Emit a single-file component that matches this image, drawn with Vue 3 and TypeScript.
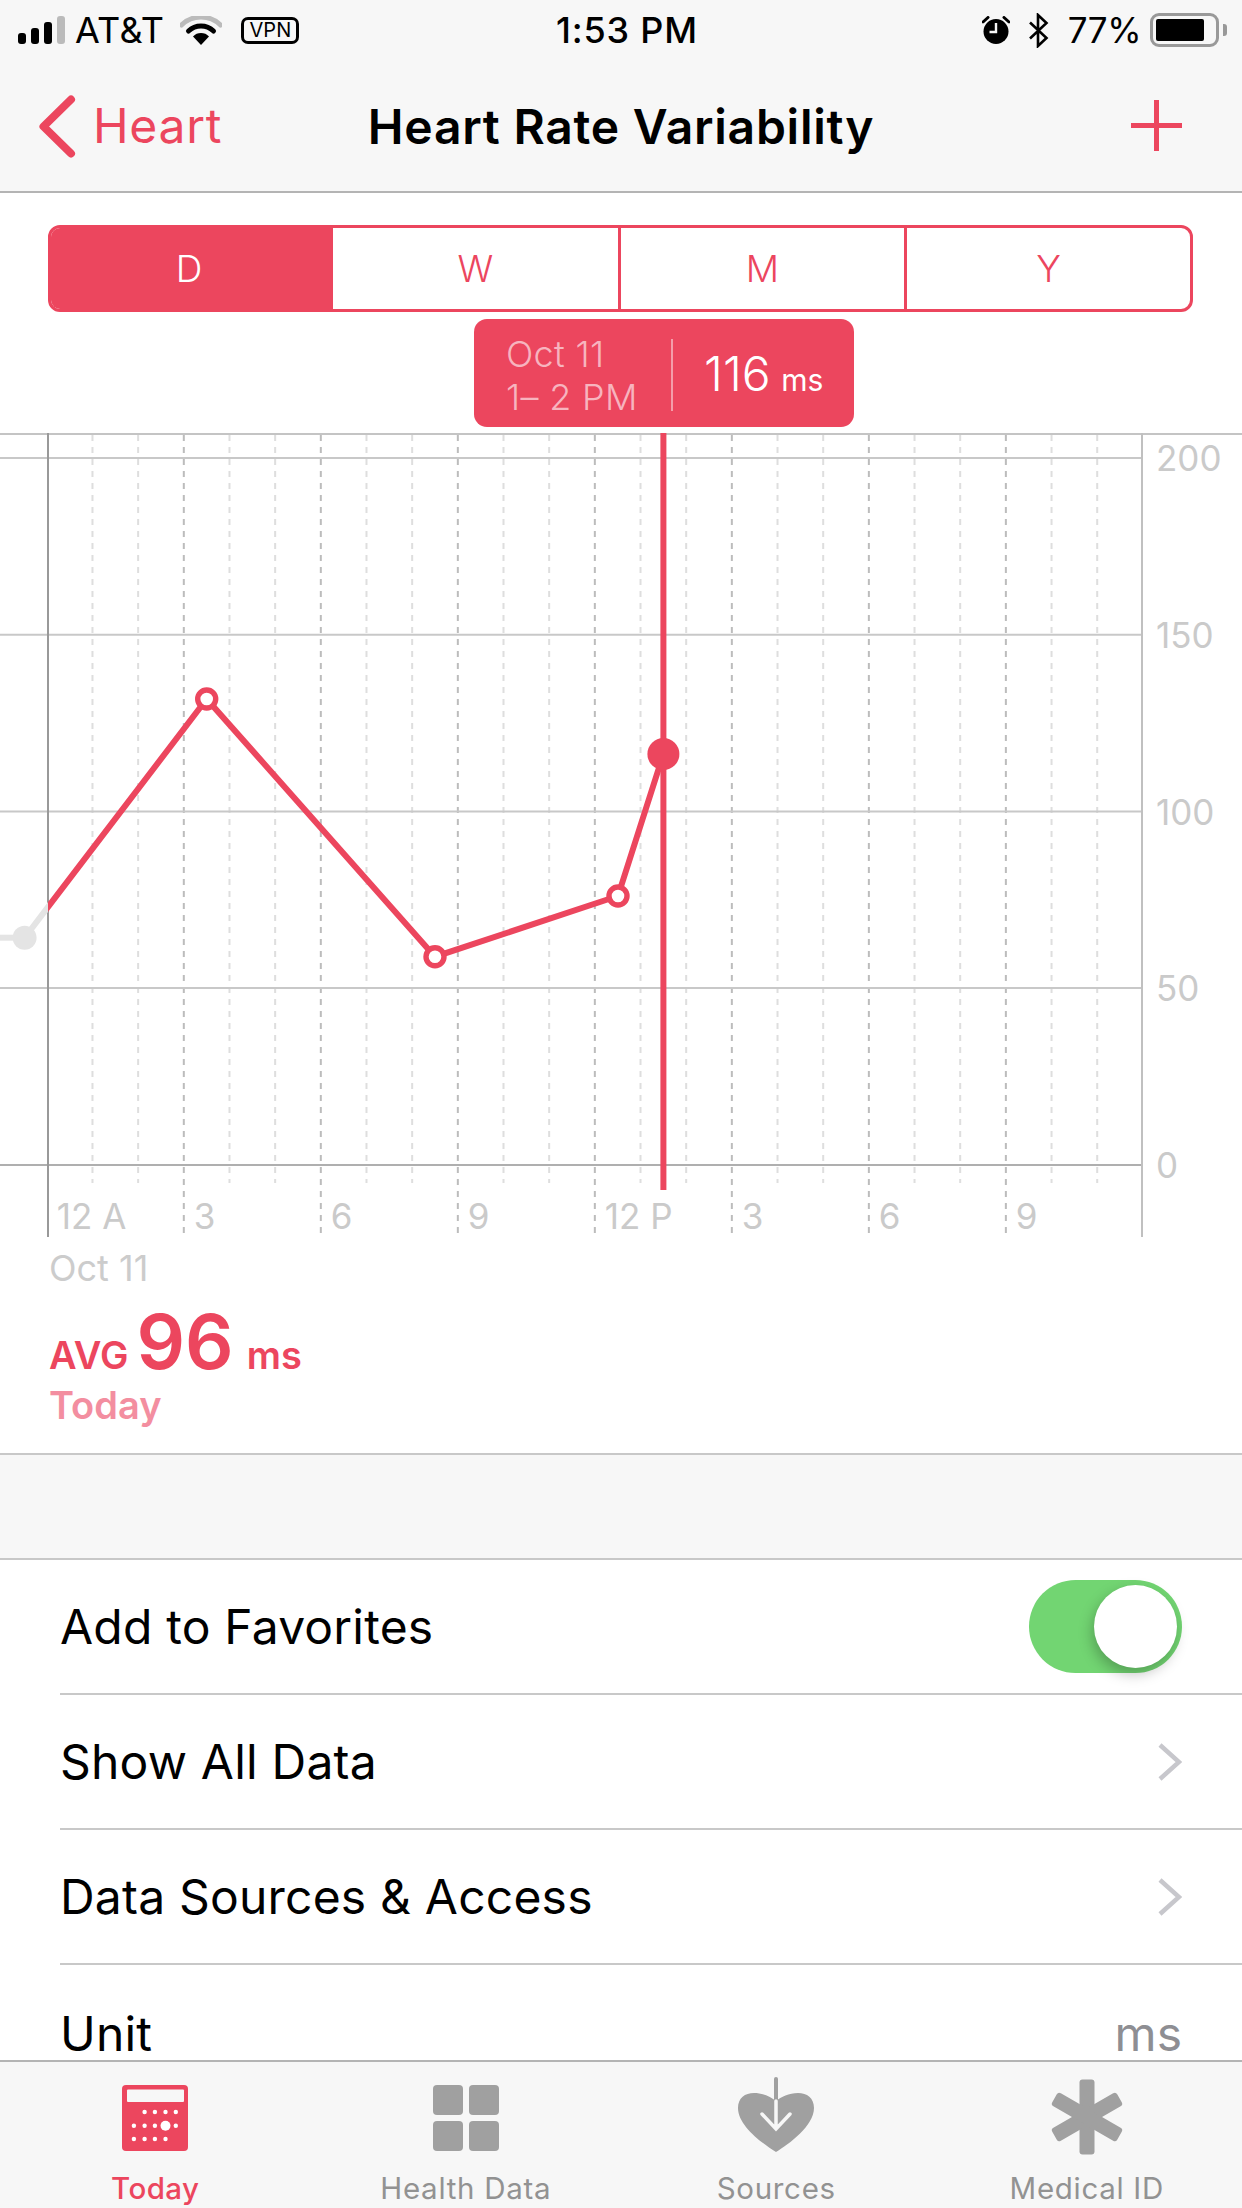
<script setup lang="ts">
const ACCENT = '#ec465e'

const segments = ['D', 'W', 'M', 'Y']

// chart geometry, in page pixels
const chartTop = 433
const hourWidth = 45.67
const gridLeft = 46.8
const plotLeft = 48
const plotRight = 1142
const chartHeight = 806

function y(v: number) {
  return v - chartTop
}

const hLines = [458, 634.7, 811.5, 988, 1165].map(y)
const yLabels = ['200', '150', '100', '50', '0']

const hours = Array.from({ length: 23 }, (_, i) => i + 1).map((i) => ({
  x: gridLeft + hourWidth * i,
  major: i % 3 === 0,
}))

const xLabels = ['12 A', '3', '6', '9', '12 P', '3', '6', '9'].map((text, i) => ({
  text,
  x: gridLeft + 10 + hourWidth * 3 * i,
}))

const pastPoint = { x: 24.6, y: y(937.7) }
const openPoints = [
  { x: 206.7, y: y(699) },
  { x: 435, y: y(956.7) },
  { x: 618, y: y(896) },
]
const selected = { x: 663.4, y: y(754) }

// the line is one shape: grey left of the axis, red right of it
const linePoints = [pastPoint, ...openPoints, selected].map((p) => `${p.x},${p.y}`).join(' ')

const rows = [
  { label: 'Add to Favorites', kind: 'toggle' },
  { label: 'Show All Data', kind: 'link' },
  { label: 'Data Sources & Access', kind: 'link' },
  { label: 'Unit', kind: 'value', value: 'ms' },
]

const dotRows = [
  { cy: 27, xs: [22.6, 32.9, 43.5, 53.8] },
  { cy: 40.7, xs: [11.9, 22.6, 32.9, 53.8] },
  { cy: 54, xs: [11.9, 22.6, 32.9, 43.5] },
]
</script>

<template>
  <div class="screen">
    <header class="top-bars">
      <div class="status-bar">
        <div class="status-side">
          <svg class="signal" width="47" height="28" viewBox="0 0 47 28">
            <rect x="0" y="17" width="8" height="11" rx="3" fill="#000" />
            <rect x="13" y="12" width="8" height="16" rx="3" fill="#000" />
            <rect x="26" y="6" width="8" height="22" rx="3" fill="#000" />
            <rect x="39" y="0" width="8" height="28" rx="3" fill="#bbb" />
          </svg>
          <span class="carrier">AT&amp;T</span>
          <svg class="wifi" width="42" height="29" viewBox="0 0 42 29">
            <path d="M1.5 9 A 28 28 0 0 1 40.5 9" fill="none" stroke="#bbb" stroke-width="5" stroke-linecap="round" />
            <path d="M8.5 15 A 18 18 0 0 1 33.5 15" fill="none" stroke="#000" stroke-width="5" stroke-linecap="round" />
            <path d="M21 29 L13 20.5 A 11 11 0 0 1 29 20.5 Z" fill="#000" />
          </svg>
          <span class="vpn">VPN</span>
        </div>
        <span class="clock">1:53 PM</span>
        <div class="status-side status-right">
          <svg class="alarm" width="28" height="28" viewBox="0 0 28 28">
            <circle cx="14" cy="15.5" r="12.5" fill="#000" />
            <path d="M14 7 V16 H7.5" fill="none" stroke="#f7f7f7" stroke-width="2.4" />
            <path d="M1 6 L6 1.5 M27 6 L22 1.5" stroke="#000" stroke-width="3" stroke-linecap="round" />
          </svg>
          <svg class="bluetooth" width="21" height="35" viewBox="0 0 21 35">
            <path d="M2 9.5 L18.5 25 L10 33 V2 L18.5 10 L2 25.5" fill="none" stroke="#000" stroke-width="2.6" />
          </svg>
          <span class="battery-text">77%</span>
          <div class="battery">
            <div class="battery-level"></div>
          </div>
          <div class="battery-nub"></div>
        </div>
      </div>
      <nav class="nav-bar">
        <div class="nav-back">
          <svg width="40" height="66" viewBox="0 0 40 66">
            <path d="M34 6.500 L6.500 33.500 L34 60.500" fill="none" :stroke="ACCENT" stroke-width="8" stroke-linecap="round" stroke-linejoin="round" />
          </svg>
          <span>Heart</span>
        </div>
        <h1 class="nav-title">Heart Rate Variability</h1>
        <svg class="nav-plus" width="51" height="51" viewBox="0 0 51 51">
          <path d="M0 25.5 H51 M25.5 0 V51" :stroke="ACCENT" stroke-width="5" />
        </svg>
      </nav>
    </header>

    <div class="segments">
      <div v-for="(seg, i) in segments" :key="seg" class="segment" :class="{ active: i === 0 }">{{ seg }}</div>
    </div>

    <section class="chart-wrap">
      <div class="tooltip">
        <div class="tooltip-when">
          <div>Oct 11</div>
          <div>1– 2 PM</div>
        </div>
        <div class="tooltip-divider"></div>
        <div class="tooltip-value">116 <small>ms</small></div>
      </div>

      <svg class="chart" width="1242" :height="chartHeight" :viewBox="`0 0 1242 ${chartHeight}`">
        <defs>
          <clipPath id="before-axis"><rect x="0" y="0" :width="plotLeft" :height="chartHeight" /></clipPath>
          <clipPath id="after-axis"><rect :x="plotLeft" y="-10" width="1194" :height="chartHeight + 10" /></clipPath>
        </defs>

        <line x1="0" y1="1" x2="1242" y2="1" stroke="#c4c4c4" stroke-width="2" />
        <template v-for="h in hours" :key="h.x">
          <line
            :x1="h.x"
            :x2="h.x"
            y1="2"
            :y2="h.major ? 804 : 750"
            :stroke="h.major ? '#bcbcbc' : '#dedede'"
            stroke-width="2"
            stroke-dasharray="6 6"
          />
        </template>
        <line
          v-for="(ly, i) in hLines"
          :key="ly"
          x1="0"
          :y1="ly"
          :x2="plotRight"
          :y2="ly"
          :stroke="i === 4 ? '#afafaf' : '#c8c8c8'"
          stroke-width="2"
        />
        <line :x1="plotLeft" y1="0" :x2="plotLeft" y2="804" stroke="#999" stroke-width="2" />
        <line :x1="plotRight" y1="0" :x2="plotRight" y2="804" stroke="#c0c0c0" stroke-width="2" />

        <text v-for="(t, i) in yLabels" :key="t" class="axis-label" x="1156" :y="hLines[i] + 13">{{ t }}</text>
        <text v-for="l in xLabels" :key="l.x" class="axis-label" :x="l.x" y="796">{{ l.text }}</text>

        <g clip-path="url(#before-axis)">
          <line x1="0" :y1="pastPoint.y" :x2="pastPoint.x" :y2="pastPoint.y" stroke="#e4e4e4" stroke-width="6" />
          <polyline :points="linePoints" fill="none" stroke="#e4e4e4" stroke-width="6" />
        </g>
        <circle :cx="pastPoint.x" :cy="pastPoint.y" r="12" fill="#e4e4e4" />

        <line :x1="selected.x" y1="-6" :x2="selected.x" y2="757" :stroke="ACCENT" stroke-width="6" />
        <polyline :points="linePoints" fill="none" :stroke="ACCENT" stroke-width="6" clip-path="url(#after-axis)" />
        <circle
          v-for="p in openPoints"
          :key="p.x"
          :cx="p.x"
          :cy="p.y"
          r="9"
          fill="#fff"
          :stroke="ACCENT"
          stroke-width="5.4"
        />
        <circle :cx="selected.x" :cy="selected.y" r="16" :fill="ACCENT" />
      </svg>

      <div class="summary">
        <div class="summary-date">Oct 11</div>
        <div class="summary-avg">
          <span class="avg-label">AVG</span>
          <span class="avg-number">96</span>
          <span class="avg-unit">ms</span>
        </div>
        <div class="summary-today">Today</div>
      </div>
    </section>

    <div class="spacer"></div>

    <section class="list">
      <div v-for="row in rows" :key="row.label" class="row">
        <div class="row-inner">
          <span class="row-label">{{ row.label }}</span>
          <div v-if="row.kind === 'toggle'" class="toggle"><div class="knob"></div></div>
          <svg v-else-if="row.kind === 'link'" width="24" height="38" viewBox="0 0 24 38">
            <path d="M2 2 L21 19 L2 36" fill="none" stroke="#c7c7cc" stroke-width="4.500" />
          </svg>
          <span v-else class="row-value">{{ row.value }}</span>
        </div>
      </div>
    </section>

    <footer class="tab-bar">
      <div class="tab active">
        <svg class="tab-icon" width="66" height="66" viewBox="0 0 66 66">
          <rect x="0" y="0" width="66" height="66" rx="4" :fill="ACCENT" />
          <rect x="5" y="4.500" width="57" height="12.500" rx="1" fill="#f7f7f7" />
          <template v-for="r in dotRows" :key="r.cy">
            <circle v-for="cx in r.xs" :key="cx" :cx="cx" :cy="r.cy" r="2.200" fill="#fff" />
          </template>
          <circle cx="43.500" cy="40.700" r="5" fill="#fff" />
        </svg>
        <span>Today</span>
      </div>
      <div class="tab">
        <svg class="tab-icon" width="66" height="66" viewBox="0 0 66 66">
          <rect x="0" y="0" width="30" height="30" rx="4" fill="#a0a0a0" />
          <rect x="36" y="0" width="30" height="30" rx="4" fill="#a0a0a0" />
          <rect x="0" y="36" width="30" height="30" rx="4" fill="#a0a0a0" />
          <rect x="36" y="36" width="30" height="30" rx="4" fill="#a0a0a0" />
        </svg>
        <span>Health Data</span>
      </div>
      <div class="tab">
        <svg class="tab-icon icon-heart" width="80" height="76" viewBox="0 0 80 76">
          <path
            d="M40 75 C27 67 2 49 2 31 C2 21 9 16 18 16 C27 16 35 20 40 24 C45 20 53 16 62 16 C71 16 78 21 78 31 C78 49 53 67 40 75 Z"
            fill="#a0a0a0"
          />
          <path d="M40 2 V24" stroke="#a0a0a0" stroke-width="4" stroke-linecap="round" />
          <path d="M40 24 V51 M26 37 L40 52 L54 37" fill="none" stroke="#f7f7f7" stroke-width="3.500" stroke-linecap="round" />
        </svg>
        <span>Sources</span>
      </div>
      <div class="tab">
        <svg class="tab-icon icon-star" width="76" height="76" viewBox="-38 -38 76 76">
          <rect x="-7.500" y="-37.500" width="15" height="75" rx="3" fill="#a0a0a0" />
          <rect x="-7.500" y="-37.500" width="15" height="75" rx="3" fill="#a0a0a0" transform="rotate(60)" />
          <rect x="-7.500" y="-37.500" width="15" height="75" rx="3" fill="#a0a0a0" transform="rotate(-60)" />
        </svg>
        <span>Medical ID</span>
      </div>
    </footer>
  </div>
</template>

<style scoped>
.screen {
  width: 1242px;
  height: 2208px;
  display: flex;
  flex-direction: column;
  overflow: hidden;
  background: #fff;
  font-family: Inter, "Liberation Sans", sans-serif;
  color: #000;
}

.top-bars {
  background: #f7f7f7;
  border-bottom: 2px solid #b4b4b4;
  height: 193px;
  box-sizing: border-box;
}

.status-bar {
  height: 60px;
  display: flex;
  align-items: center;
  justify-content: space-between;
  position: relative;
  padding: 0 15px 0 18px;
  font-size: 35px;
}

.status-side {
  display: flex;
  align-items: center;
}

.carrier {
  margin-left: 10px;
  font-size: 36px;
  letter-spacing: 0.3px;
}

.wifi {
  margin-left: 16px;
}

.vpn {
  margin-left: 19px;
  border: 3px solid #000;
  border-radius: 7px;
  width: 58px;
  height: 27px;
  box-sizing: border-box;
  font-size: 20px;
  line-height: 21px;
  text-align: center;
}

.clock {
  position: absolute;
  left: 556px;
  font-size: 36px;
  font-weight: 500;
  letter-spacing: 0.8px;
}

.bluetooth {
  margin-left: 18px;
}

.battery-text {
  margin-left: 19px;
  letter-spacing: -0.5px;
}

.battery {
  margin-left: 9px;
  width: 69px;
  height: 34px;
  box-sizing: border-box;
  border: 3px solid #999;
  border-radius: 9px;
  padding: 3px;
}

.battery-level {
  width: 48px;
  height: 22px;
  background: #000;
  border-radius: 2px;
}

.battery-nub {
  width: 4px;
  height: 12px;
  margin-left: 4px;
  background: #999;
  border-radius: 0 3px 3px 0;
}

.nav-bar {
  height: 131px;
  display: flex;
  align-items: center;
  justify-content: space-between;
  position: relative;
  padding: 0 60px 0 37px;
}

.nav-back {
  display: flex;
  align-items: center;
  gap: 16px;
  color: #ec465e;
  font-size: 48px;
  font-weight: 400;
  letter-spacing: 0.7px;
}

.nav-title {
  position: absolute;
  left: 0;
  right: 0;
  margin: 0;
  padding-top: 2px;
  text-align: center;
  font-size: 48px;
  font-weight: 600;
  letter-spacing: 0.75px;
  pointer-events: none;
}

.segments {
  margin: 32px 49px 0 48px;
  height: 87px;
  display: grid;
  grid-template-columns: 282px 288px 286px 1fr;
  border: 3px solid #ec465e;
  border-radius: 12px;
  box-sizing: border-box;
  overflow: hidden;
}

.segment {
  display: flex;
  align-items: center;
  justify-content: center;
  color: #ec465e;
  font-size: 37px;
  font-weight: 350;
  border-right: 3px solid #ec465e;
}

.segment:last-child {
  border-right: none;
}

.segment.active {
  background: #ec465e;
  color: #fff;
  padding-right: 3px;
}

.chart-wrap {
  position: relative;
  padding-top: 121px;
}

.tooltip {
  position: absolute;
  left: 474px;
  top: 7px;
  width: 380px;
  height: 108px;
  box-sizing: border-box;
  background: #ec465e;
  border-radius: 13px;
  display: flex;
  align-items: center;
  padding-left: 32px;
  color: #fff;
}

.tooltip-when {
  width: 165px;
  padding-top: 5px;
  font-size: 36px;
  line-height: 43px;
  font-weight: 300;
  letter-spacing: 0.3px;
  color: #f7b4bf;
  white-space: nowrap;
}

.tooltip-divider {
  width: 2px;
  height: 72px;
  margin-top: 4px;
  background: #f49daa;
}

.tooltip-value {
  margin-left: 31px;
  font-size: 48px;
  font-weight: 300;
  white-space: nowrap;
}

.tooltip-value small {
  font-size: 30px;
  font-weight: 400;
  margin-left: -3px;
}

.chart {
  display: block;
}

.axis-label {
  font-size: 35px;
  fill: #cacaca;
}

.summary {
  padding-left: 49px;
  height: 216px;
  box-sizing: border-box;
  border-bottom: 2px solid #c8c8c8;
}

.summary-date {
  font-size: 36px;
  color: #ccc;
  line-height: 42px;
  padding-top: 8px;
}

.summary-avg {
  display: flex;
  align-items: baseline;
  color: #ec465e;
  font-weight: 600;
  margin-top: 12px;
  line-height: 80px;
}

.avg-label {
  font-size: 38px;
}

.avg-number {
  font-size: 76px;
  margin-left: 8px;
}

.avg-unit {
  font-size: 38px;
  margin-left: 13px;
}

.summary-today {
  margin-top: -12px;
  font-size: 38px;
  font-weight: 600;
  color: #f38ea0;
  line-height: 44px;
}

.spacer {
  height: 103px;
  flex: none;
  background: #f7f7f7;
  border-bottom: 2px solid #c8c8c8;
}

.list {
  flex: 1;
  background: #fff;
}

.row {
  height: 135px;
  padding-left: 60px;
}

.row-inner {
  height: 135px;
  box-sizing: border-box;
  border-bottom: 2px solid #c8c8c8;
  padding-right: 60px;
  display: flex;
  align-items: center;
  justify-content: space-between;
}

/* the last row stops at the tab bar, its text sits a little lower */
.row:last-child,
.row:last-child .row-inner {
  height: 95px;
}

.row:last-child .row-inner {
  border-bottom: none;
  align-items: flex-start;
  padding-top: 45px;
}

.row-label {
  font-size: 48px;
  line-height: 1;
  letter-spacing: 0.2px;
}

.row-value {
  font-size: 48px;
  line-height: 1;
  color: #8e8e93;
}

.toggle {
  width: 153px;
  height: 93px;
  border-radius: 47px;
  background: #72d572;
  position: relative;
}

.knob {
  position: absolute;
  top: 5px;
  right: 5px;
  width: 83px;
  height: 83px;
  border-radius: 50%;
  background: #fff;
  box-shadow: -2px 6px 14px rgba(0, 0, 0, 0.25);
}

.tab-bar {
  flex: none;
  height: 148px;
  box-sizing: border-box;
  border-top: 2px solid #b4b4b4;
  background: #f7f7f7;
  display: grid;
  grid-template-columns: repeat(4, 1fr);
}

.tab {
  display: flex;
  flex-direction: column;
  align-items: center;
  justify-content: flex-end;
  font-size: 29.5px;
  letter-spacing: 0.7px;
  line-height: 36px;
  color: #929292;
  padding-bottom: 2px;
}

.tab.active {
  color: #ec465e;
  font-weight: 500;
  letter-spacing: 0.4px;
}

.tab-icon {
  margin-bottom: 19px;
}

.tab-icon.icon-heart {
  margin-bottom: 17px;
}

.tab-icon.icon-star {
  margin-bottom: 15px;
}
</style>

<style>
body {
  background: #fff;
}
</style>
